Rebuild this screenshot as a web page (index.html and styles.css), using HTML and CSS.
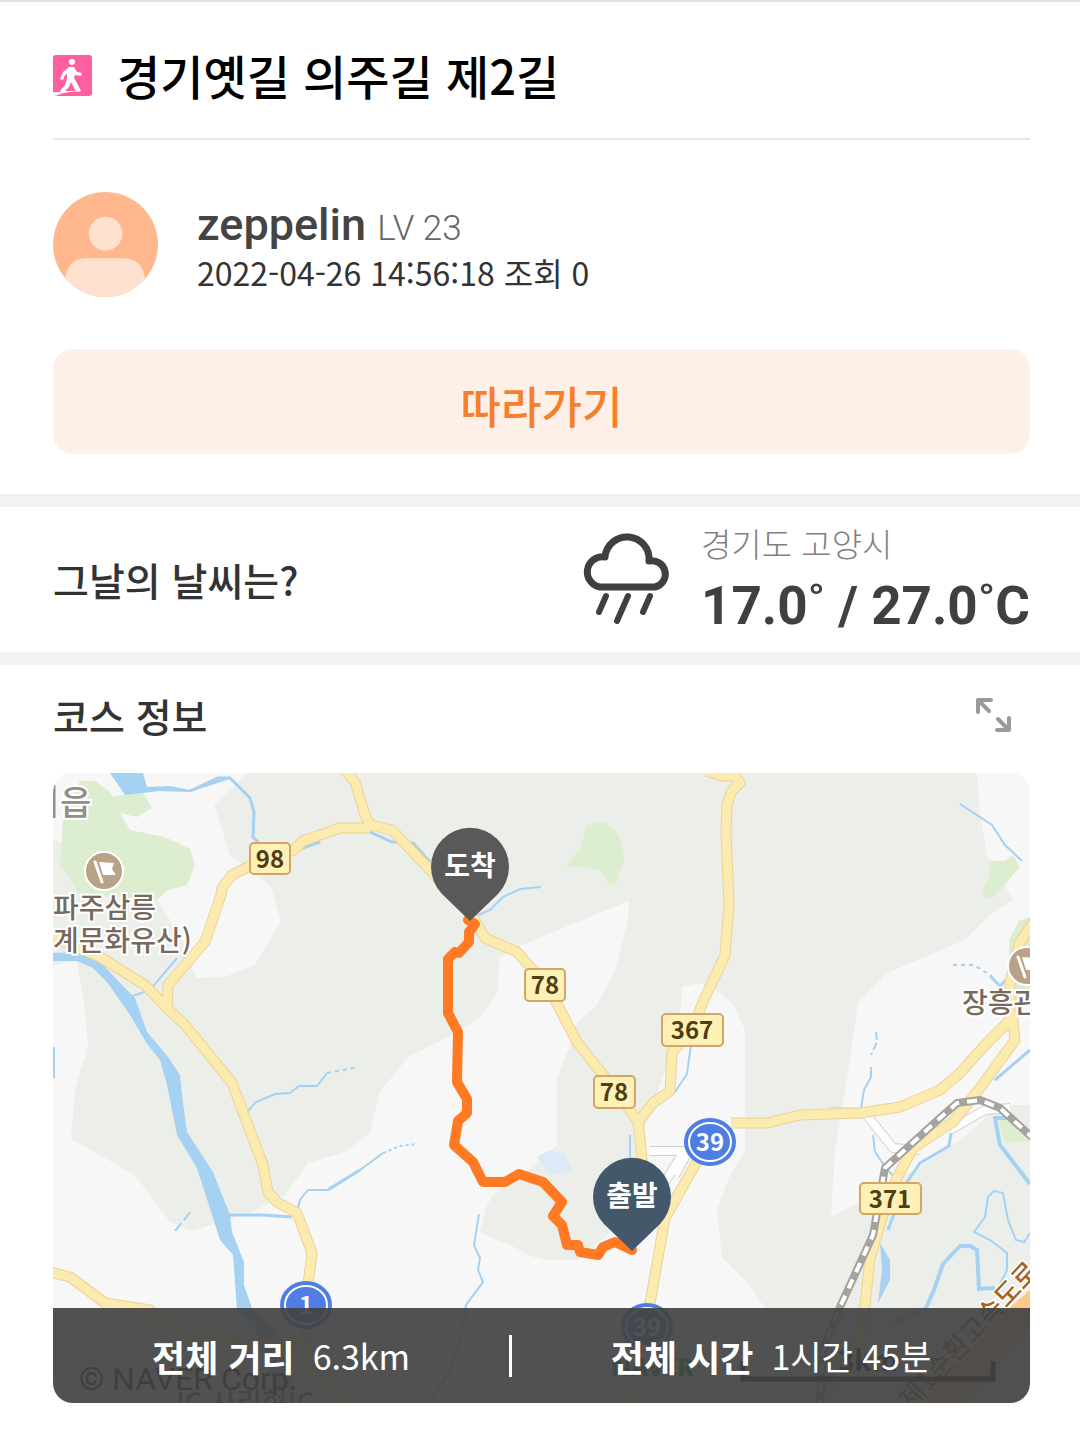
FILE: index.html
```html
<!DOCTYPE html>
<html lang="ko">
<head>
    <meta charset="UTF-8">
    <meta name="viewport" content="width=device-width, initial-scale=1.0">
    <title>경기옛길 의주길 제2길</title>
    <link rel="stylesheet" href="styles.css">
</head>
<body>
    <main class="page">
        <section class="intro">
            <header class="title-bar">
                <svg class="walk-icon" viewBox="0 0 39 41" aria-hidden="true">
                    <rect width="39" height="41" rx="3" fill="#ff5f9e"/>
                    <circle cx="19" cy="7" r="3" fill="#fff"/>
                    <path d="M16 12 L21 12 L24 17 L29 18 L28 21 L22 20 L21 23 L25 30 L28 36 L23 37 L20 31 L18 27 L16 32 L11 37 L7 36 L12 30 L14 24 L14 19 L12 20 L10 25 L7 24 L10 17 Z" fill="#fff"/>
                    <path d="M0 37 Q5 38 9 36 L28 36 Q14 37 7 39 Q4 41 0 41 Z" fill="#fff"/>
                </svg>
                <h1>경기옛길 의주길 제2길</h1>
            </header>

            <div class="author">
                <svg class="avatar" viewBox="0 0 106 106" aria-hidden="true">
                    <clipPath id="avatarClip"><circle cx="53" cy="53" r="53"/></clipPath>
                    <g clip-path="url(#avatarClip)">
                        <rect width="106" height="106" fill="#ffb88e"/>
                        <circle cx="53" cy="42" r="17" fill="#ffe1d0"/>
                        <path d="M12 106 V90 Q14 67 34 67 H71 Q91 67 93 90 V106 Z" fill="#ffe1d0"/>
                    </g>
                </svg>
                <div class="author-info">
                    <p class="author-name">zeppelin <span class="level">LV 23</span></p>
                    <p class="author-meta">2022-04-26 14:56:18 조회 0</p>
                </div>
            </div>

            <button type="button" class="follow-btn">따라가기</button>
        </section>

        <section class="weather">
            <h2>그날의 날씨는?</h2>
            <div class="weather-now">
                <svg class="rain-icon" viewBox="584 532 91 94" aria-hidden="true">
                    <path d="M602 587 A15 15 0 0 1 607 557 A22 22 0 0 1 651 561 A13 13 0 0 1 657 587 Z" stroke-width="7"/>
                    <path d="M608 596 L601 612 M630 596 L619 621 M652 596 L645 612" stroke-width="6"/>
                </svg>
                <div>
                    <p class="region">경기도 고양시</p>
                    <p class="temp">17.0˚ / 27.0˚C</p>
                </div>
            </div>
        </section>

        <section class="course">
            <div class="course-head">
                <h2>코스 정보</h2>
                <button type="button" class="expand-btn" aria-label="지도 확대">
                    <svg viewBox="974 696 39 39" aria-hidden="true">
                        <path d="M978 712 V700 H991 M979 701 L989 711 M1009 718 V730 H997 M1008 729 L998 719"/>
                    </svg>
                </button>
            </div>

            <div class="map">
                <svg class="map-canvas" viewBox="53 773 977 630" role="img" aria-label="코스 지도">
                    <defs>
                        <g id="roads">
                            <path d="M53 938 L72 945 L100 957 L145 985 L167 1008 L185 1025 L232 1083 L263 1165 L268 1192 L277 1202 L297 1213 L312 1253 L308 1285 L304 1320 L310 1370 L350 1403"/>
                            <path d="M167 1008 L168 985 L205 942 L221 895 L222 888 L232 875 L250 866 L270 857 L294 850 L303 841 L340 828 L370 828"/>
                            <path d="M343 768 L355 782 L365 815 L370 825 L392 830 L470 912 L485 938 L517 952 L533 970 L555 1000 L577 1042 L603 1075 L625 1103 L638 1122"/>
                            <path d="M706 771 L722 776 L735 776 L740 783 L731 792 L727 805 L726 832 L729 905 L725 955 L703 1002 L692 1030 L672 1052 L670 1091 L653 1103 L638 1122 L642 1158 L640 1200"/>
                            <path d="M712 1135 L665 1218 L650 1303 L635 1403"/>
                            <path d="M731 1123 L767 1123 L800 1115 L860 1113 L900 1107 L940 1090 L960 1073 L985 1045 L1010 1020 L1010 982 L1020 942 L1035 920"/>
                            <path d="M1012 1012 L1015 1040 L980 1088 L953 1122 L913 1148 L897 1178 L882 1218 L870 1258 L865 1305 L860 1340 L820 1403"/>
                            <path d="M50 1272 L70 1277 L105 1303 L150 1310 L183 1338 L300 1346"/>
                        </g>
                        <path id="rail" d="M1035 1140 L1000 1108 L980 1100 L957 1103 L940 1118 L885 1168 L873 1235 L840 1307 L823 1350 L820 1403"/>
                        <path id="links" d="M650 1151 H684 L662 1187 M675 1175 L690 1148 M830 1112 L865 1113 L893 1148 L920 1150 M950 1130 L985 1110 L1010 1108"/>
                        <g id="poi">
                            <circle r="19" fill="#b9a287" stroke="#fff" stroke-width="2"/>
                            <path d="M-9 -9 L-2 11" stroke="#fff" stroke-width="3" stroke-linecap="round"/>
                            <path d="M-5 -9 L10 -8 L8 -2 L12 4 L-1 4 Z" fill="#fff"/>
                        </g>
                        <path id="pin" d="M0 54 L-28 27 A39 39 0 1 1 28 27 Z"/>
                    </defs>

                    <!-- land -->
                    <rect x="53" y="773" width="977" height="630" fill="#ecefe9"/>
                    <g fill="#f7f7f7">
                        <path d="M53 773 H248 L214 805 L230 855 L250 870 L271 887 L281 922 L254 965 L225 977 L196 978 L182 940 L158 900 L120 860 L53 840 Z"/>
                        <path d="M53 966 L76 960 L84 1000 L88 1045 L75 1090 L71 1139 L135 1175 L170 1222 L192 1231 L250 1213 L285 1195 L308 1163 L345 1152 L370 1133 L380 1092 L408 1057 L450 1036 L480 1018 L498 992 L499 958 L522 945 L629 901 L627 925 L615 970 L597 1005 L577 1023 L570 1045 L557 1078 V1145 L535 1165 L495 1193 L487 1205 L480 1233 L510 1245 L530 1256 L545 1260 H577 L610 1233 L640 1200 V1140 L662 1080 L680 1020 L682 987 L700 983 L716 990 L733 1004 L745 1030 V1150 L730 1175 L717 1210 L722 1257 L745 1280 L765 1308 L800 1403 H53 Z"/>
                        <path d="M977 773 L980 815 L987 855 L1004 885 L1013 900 L990 915 L965 940 L887 973 L858 1003 L850 1060 L835 1150 L831 1217 L860 1202 L900 1178 L920 1167 L960 1140 L1000 1105 H1030 V773 Z"/>
                    </g>

                    <!-- parks -->
                    <g fill="#dcedd0">
                        <path d="M80 781 L95 781 L110 792 L113 797 L128 794 L143 793 L152 808 L137 817 L120 813 L130 830 L165 837 L190 849 L195 865 L187 885 L168 890 L157 900 L78 893 L70 878 L60 866 L63 820 Z"/>
                        <path d="M586 827 Q600 817 613 828 Q624 840 624 860 L615 885 L608 884 L602 872 Q585 864 565 867 L580 850 Z"/>
                        <path d="M990 861 L1004 861 L1013 855 L1020 867 L1008 881 L995 894 L992 898 H984 L983 888 L990 877 Z"/>
                        <path d="M1009 940 L1019 921 L1030 917 V1000 L1010 1000 Z"/>
                        <path d="M998 1119 L1016 1120 L1028 1141 L1005 1143 Z"/>
                    </g>

                    <!-- water -->
                    <g fill="#a5d2f2">
                        <path d="M53 953 L77 952 L97 958 L122 985 L135 998 L147 1032 L168 1057 L180 1075 L182 1095 L187 1132 L213 1172 L230 1215 L232 1232 L244 1262 V1285 L252 1308 L275 1330 L300 1403 H280 L262 1340 L237 1310 L233 1255 L220 1240 L197 1168 L177 1135 L167 1085 L160 1060 L147 1044 L130 1015 L107 982 L93 968 L77 961 H53 Z"/>
                        <path d="M110 773 H143 L147 787 L170 786 L190 790 L220 777 L230 779 L190 792 L160 791 L125 795 Z"/>
                        <path d="M880 1243 L890 1260 L890 1280 L878 1303 L882 1270 Z"/>
                        <path d="M537 1157 L548 1151 L564 1153 L573 1171 L560 1174 L548 1173 Z" fill="#dce9f6"/>
                    </g>
                    <g class="streams">
                        <path d="M190 791 L218 778 L230 778 L250 798 L254 812 L253 837 L260 844" stroke-width="3"/>
                        <path d="M130 997 L150 990 L177 958"/>
                        <path d="M54 1047 V1078"/>
                        <path d="M300 849 L320 842 M370 832 L392 842 L413 843 L430 862" stroke-width="3"/>
                        <path d="M476 916 L490 910 L503 897 L520 889 L541 887"/>
                        <path d="M247 1112 L256 1102 L275 1094 L290 1093 L299 1086 L317 1086 L327 1073"/>
                        <path d="M327 1073 L358 1067" stroke-dasharray="4 4"/>
                        <path d="M297 1212 L300 1200 L308 1190 H329 L360 1170 L383 1153"/>
                        <path d="M329 1189 L360 1170" stroke-width="3"/>
                        <path d="M383 1153 L400 1146 L417 1144" stroke-dasharray="3 3"/>
                        <path d="M230 1215 H262 L292 1217" stroke-width="3"/>
                        <path d="M175 1231 L192 1210" stroke-dasharray="10 4"/>
                        <path d="M479 1214 L474 1245 L480 1258 L478 1270 L483 1282 L466 1305 L460 1340 L450 1370 L430 1403"/>
                        <path d="M630 1135 V1162 M691 1045 L687 1074 L675 1092 M650 1290 L642 1310"/>
                        <path d="M960 804 L992 825 L1005 845 L1022 861"/>
                        <path d="M953 965 L974 965 L993 977" stroke-dasharray="4 4"/>
                        <path d="M990 976 L1000 986 L1006 980 M1030 1050 L995 1080" stroke-width="3"/>
                        <path d="M876 1032 L877 1042 L871 1055" stroke-dasharray="8 3"/>
                        <path d="M871 1067 V1077 L864 1090 L861 1108"/>
                        <path d="M873 1135 L875 1152 L886 1168 L900 1183"/>
                        <path d="M951 1133 L949 1146 L920 1163 L905 1185 L888 1230" stroke-width="3"/>
                        <path d="M1008 1118 L995 1118 L1000 1145 L1030 1184" stroke-width="4"/>
                        <path d="M1030 1233 L1024 1242 L1016 1240 L1008 1220 L1003 1193 L994 1191 L988 1197 L985 1217 L974 1232 L990 1240 L1007 1253 V1270 L1000 1284"/>
                        <path d="M995 1288 L979 1289 L977 1250 L970 1246 H960 L943 1264 L934 1290 L925 1310 L888 1325" stroke-width="4"/>
                    </g>

                    <!-- side roads -->
                    <use href="#links" class="link-edge"/>
                    <use href="#links" class="link-fill"/>

                    <use href="#roads" class="road-edge"/>
                    <use href="#roads" class="road-fill"/>

                    <use href="#rail" class="rail"/>
                    <use href="#rail" class="rail-dash"/>

                    <!-- expressway -->
                    <path d="M1030 1290 L1000 1316 L920 1403 H965 L1030 1330 Z" fill="#fbc98b"/>
                    <text class="express-name" transform="translate(911 1411) rotate(-47)">제1순환고속도로</text>

                    <!-- places -->
                    <use href="#poi" x="104" y="871"/>
                    <use href="#poi" x="1027" y="966"/>
                    <g class="place">
                        <text class="town" x="60" y="815">읍</text>
                        <path d="M54 785 V818" stroke="#928e8c" stroke-width="3"/>
                        <text x="53" y="918">파주삼릉</text>
                        <text x="53" y="951">계문화유산)</text>
                        <text x="962" y="1013">장흥관</text>
                        <text x="176" y="1413">IC 사리현IC</text>
                    </g>

                    <!-- road numbers -->
                    <g class="shield">
                        <rect x="250" y="843" width="40" height="31" rx="4"/>
                        <text x="270" y="868">98</text>
                        <rect x="525" y="969" width="40" height="32" rx="4"/>
                        <text x="545" y="994">78</text>
                        <rect x="662" y="1014" width="61" height="32" rx="4"/>
                        <text x="692" y="1039">367</text>
                        <rect x="594" y="1076" width="41" height="32" rx="4"/>
                        <text x="614" y="1101">78</text>
                        <rect x="860" y="1183" width="61" height="31" rx="4"/>
                        <text x="890" y="1208">371</text>
                    </g>
                    <g class="route-no">
                        <ellipse class="ring" cx="710" cy="1142" rx="25" ry="23"/>
                        <ellipse cx="710" cy="1142" rx="21" ry="19"/>
                        <text x="710" y="1151">39</text>
                        <ellipse class="ring" cx="306" cy="1305" rx="25" ry="23"/>
                        <ellipse cx="306" cy="1305" rx="21" ry="19"/>
                        <text x="306" y="1314">1</text>
                        <ellipse class="ring" cx="647" cy="1327" rx="25" ry="23"/>
                        <ellipse cx="647" cy="1327" rx="21" ry="19"/>
                        <text x="647" y="1336">39</text>
                    </g>

                    <!-- copyright, logo and scale -->
                    <text class="copyright" x="79" y="1390">© NAVER Corp.</text>
                    <rect x="596" y="1346" width="118" height="41" rx="20" fill="#fff"/>
                    <text class="naver" x="611" y="1376">NAVER</text>
                    <path d="M743 1361 V1379 H993 V1361" fill="none" stroke="#111" stroke-width="5"/>
                    <text class="scale" x="868" y="1371">3km</text>

                    <!-- course -->
                    <path class="track" d="M468 920 L475 924 L469 932 V942 L459 953 L455 952 L448 959 V1013 L458 1032 L457 1082 L467 1099 V1113 L458 1121 L454 1145 L473 1162 L483 1182 H505 L519 1174 L543 1182 L562 1202 L553 1216 L562 1225 L567 1245 H578 L580 1252 L598 1255 L603 1247 L615 1242 L632 1250"/>
                    <use href="#pin" x="470" y="867" fill="#595959"/>
                    <text class="pin-label" x="470" y="876">도착</text>
                    <use href="#pin" x="632" y="1197" fill="#44586b"/>
                    <text class="pin-label" x="632" y="1206">출발</text>
                </svg>

                <dl class="summary">
                    <div class="summary-item">
                        <dt>전체 거리</dt>
                        <dd>6.3km</dd>
                    </div>
                    <div class="summary-item">
                        <dt>전체 시간</dt>
                        <dd>1시간 45분</dd>
                    </div>
                </dl>
            </div>
        </section>
    </main>
</body>
</html>
```

FILE: styles.css
```css
* {
    box-sizing: border-box;
}

body {
    margin: 0;
    background: #fff;
    color: #333;
    font-family: 'Noto Sans CJK KR', 'Noto Sans', sans-serif;
}

h1, h2, p, dl, dd {
    margin: 0;
}

button {
    border: none;
    cursor: pointer;
    font-family: inherit;
}

svg {
    display: block;
}

.page {
    border-top: 2px solid #e2e2e2;
}

.intro {
    padding: 0 50px 40px 53px;
}

.title-bar {
    display: flex;
    align-items: center;
    gap: 25px;
    height: 138px;
    padding-bottom: 14px;
    padding-top: 24px;
    border-bottom: 2px solid #e6e6e6;
}

.walk-icon {
    width: 39px;
    height: 41px;
}

.title-bar h1 {
    color: #000;
    font-size: 47px;
    font-weight: 500;
    line-height: 60px;
}

.author {
    display: flex;
    align-items: center;
    gap: 39px;
    padding: 52px 0;
}

.avatar {
    width: 105px;
    height: 105px;
}

.author-name {
    color: #444;
    font-family: Roboto, sans-serif;
    font-size: 45px;
    font-weight: 500;
    line-height: 50px;
}

.level {
    color: #666;
    font-size: 35px;
    font-weight: 300;
}

.author-meta {
    font-size: 32px;
    line-height: 36px;
}

.follow-btn {
    width: 100%;
    height: 105px;
    padding: 6px 0 0;
    border-radius: 20px;
    background: #fff0e7;
    color: #f67f2b;
    font-size: 44px;
    font-weight: 500;
}

.weather {
    display: flex;
    align-items: center;
    justify-content: space-between;
    padding: 12px 50px 13px 53px;
    border-top: 13px solid #f1f2f4;
    border-bottom: 13px solid #f1f2f4;
}

.weather h2,
.course h2 {
    font-size: 39px;
    font-weight: 500;
    line-height: 52px;
}

.weather-now {
    display: flex;
    align-items: center;
    gap: 28px;
}

.rain-icon {
    width: 91px;
    height: 94px;
    fill: none;
    stroke: #404040;
    stroke-linecap: round;
    stroke-linejoin: round;
}

.region {
    color: #808080;
    font-size: 33px;
    font-weight: 300;
    line-height: 48px;
}

.temp {
    padding-top: 6px;
    color: #404040;
    font-family: Roboto, sans-serif;
    font-size: 53px;
    font-weight: 700;
    line-height: 66px;
    white-space: nowrap;
}

.course {
    padding: 0 50px 38px 53px;
}

.course-head {
    display: flex;
    align-items: center;
    justify-content: space-between;
    height: 108px;
    padding-right: 17px;
    padding-bottom: 8px;
}

.expand-btn {
    padding: 0;
    background: none;
}

.expand-btn svg {
    width: 39px;
    height: 39px;
    fill: none;
    stroke: #999;
    stroke-width: 4;
    stroke-linecap: round;
    stroke-linejoin: round;
}

.map {
    position: relative;
    overflow: hidden;
    border-radius: 20px;
}

.map-canvas {
    width: 100%;
    height: auto;
}

.streams {
    fill: none;
    stroke: #a5d2f2;
    stroke-width: 2;
}

.link-edge,
.link-fill,
.road-edge,
.road-fill,
.rail,
.rail-dash {
    fill: none;
    stroke-linejoin: round;
}

.link-edge {
    stroke: #d0d0d0;
    stroke-width: 10;
}

.link-fill {
    stroke: #fdfdfd;
    stroke-width: 8;
}

.road-edge {
    stroke: #ecd295;
    stroke-width: 11;
}

.road-fill {
    stroke: #fcebaf;
    stroke-width: 9;
}

.rail {
    stroke: #a5a39f;
    stroke-width: 8;
}

.rail-dash {
    stroke: #fff;
    stroke-width: 4;
    stroke-dasharray: 10 8;
}

.place text {
    fill: #756960;
    stroke: #fff;
    stroke-width: 4;
    paint-order: stroke;
    font-size: 28px;
    font-weight: 500;
}

.place .town {
    fill: #928e8c;
    font-size: 34px;
}

.express-name {
    fill: #a5651b;
    stroke: #fff;
    stroke-width: 3;
    paint-order: stroke;
    font-size: 27px;
    font-weight: 500;
}

.shield rect {
    fill: #fff1b5;
    stroke: #d3a566;
    stroke-width: 2;
}

.shield text,
.route-no text {
    font-size: 24px;
    font-weight: 700;
    text-anchor: middle;
}

.shield text {
    fill: #4f3d15;
}

.route-no ellipse {
    fill: #4e7de4;
    stroke: #fff;
    stroke-width: 2;
}

.route-no .ring {
    stroke: #4e7de4;
}

.route-no text {
    fill: #fff;
}

.copyright {
    fill: #222;
    font-family: Roboto, sans-serif;
    font-size: 32px;
}

.naver {
    fill: #00a836;
    font-family: 'Noto Sans', sans-serif;
    font-size: 24px;
    font-weight: 900;
}

.scale {
    fill: #111;
    font-size: 28px;
    font-weight: 700;
    text-anchor: middle;
}

.track {
    fill: none;
    stroke: #ff7a22;
    stroke-width: 10;
    stroke-linecap: round;
    stroke-linejoin: round;
}

.pin-label {
    fill: #fff;
    font-size: 28px;
    font-weight: 700;
    text-anchor: middle;
}

.summary {
    position: absolute;
    right: 0;
    bottom: 0;
    left: 0;
    display: flex;
    align-items: center;
    height: 95px;
    background: rgba(66, 66, 66, 0.92);
    color: #fff;
}

.summary-item {
    display: flex;
    flex: 1;
    align-items: center;
    justify-content: center;
    gap: 18px;
    height: 42px;
    line-height: 42px;
}

.summary-item:first-child {
    flex: 0 0 47%;
    border-right: 3px solid #fff;
}

.summary-item dt {
    font-size: 36px;
    font-weight: 700;
}

.summary-item dd {
    font-size: 34px;
}
```
